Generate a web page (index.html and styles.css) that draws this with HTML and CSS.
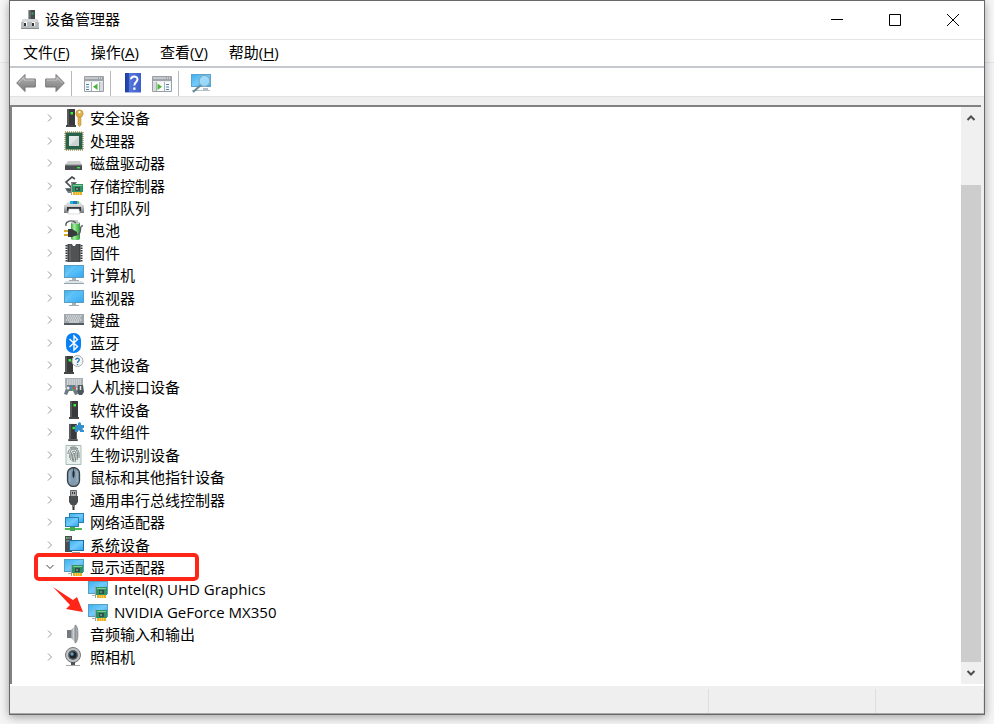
FILE: index.html
```html
<!DOCTYPE html>
<html lang="zh-CN">
<head>
<meta charset="utf-8">
<meta name="viewport" content="width=device-width, initial-scale=1">
<title>设备管理器</title>
<link rel="stylesheet" href="styles.css">
</head>
<body>
<svg class="defs" aria-hidden="true">
  <defs>
    <linearGradient id="blue" x1="0" y1="0" x2="1" y2="1"><stop offset="0" stop-color="#41b1ee"/><stop offset=".5" stop-color="#71cbfc"/><stop offset="1" stop-color="#36a7ee"/></linearGradient>
    <linearGradient id="grey" x1="0" y1="0" x2="0" y2="1"><stop offset="0" stop-color="#d8dadb"/><stop offset="1" stop-color="#74787b"/></linearGradient>
    <linearGradient id="arrow" x1="0" y1="0" x2="0" y2="1"><stop offset="0" stop-color="#b4b4b4"/><stop offset="1" stop-color="#7b7b7b"/></linearGradient>
    <linearGradient id="help" x1="0" y1="0" x2="1" y2="0"><stop offset="0" stop-color="#1d3c9e"/><stop offset=".22" stop-color="#274bb3"/><stop offset=".24" stop-color="#5677da"/><stop offset="1" stop-color="#3c5fcb"/></linearGradient>
    <linearGradient id="metal" x1="0" y1="0" x2="1" y2="0"><stop offset="0" stop-color="#8f9499"/><stop offset=".6" stop-color="#d9dcde"/><stop offset="1" stop-color="#75797d"/></linearGradient>
    <linearGradient id="cell" x1="0" y1="0" x2="1" y2="0"><stop offset="0" stop-color="#35a33c"/><stop offset=".35" stop-color="#a5f09f"/><stop offset="1" stop-color="#2d9838"/></linearGradient>
    <symbol id="chev" viewBox="0 0 10 10"><path d="M3 1.500 6.500 5 3 8.500" fill="none" stroke="currentColor"/></symbol>
    <symbol id="tower" viewBox="0 0 10 20"><path d="M1 1h8v16H1z" fill="#383a3c"/><path d="M1 1h2v16H1z" fill="#57595b"/><path d="M0 17h10v2H0z" fill="#444648"/><path d="M4.500 4h2.500v2.500H4.500z" fill="#37ef38"/></symbol>
    <symbol id="card" viewBox="0 0 12 12"><path d="M0 0h1v12H0z" fill="#9aa19f"/><path d="M1 1h11v8H1z" fill="#2b9460"/><path d="M2 2h9v1H2z" fill="#86cc94"/><path d="M4 4h5v4H4z" fill="#31504a"/><path d="M5 5h2v2H5z" fill="#6b8d80"/><path d="M2 9h9v3H2z" fill="#e9ae24"/><path d="M4.500 9v3M6.500 9v3M8.500 9v3" stroke="#fae16b" stroke-width=".6"/></symbol>
    <symbol id="screen" viewBox="0 0 20 16"><path d="M0 0h20v13H0z" fill="#5b9dbf"/><path d="M1 1h18v11H1z" fill="url(#blue)"/><path d="M1 12 13 1h6v11z" fill="#35adf4" opacity=".4"/><path d="M8 13h4v2H8z" fill="#a2b3bb"/><path d="M5 15h10v1H5z" fill="#a0acb1"/></symbol>
    <symbol id="display" viewBox="0 0 20 20"><path d="M0 2h20v13H0z" fill="#5b9dbf"/><path d="M1 3h18v11H1z" fill="url(#blue)"/><path d="M4 16h4v1H4z" fill="#a7b5ba"/><use href="#card" x="7" y="7" width="12" height="12"/></symbol>
  </defs>
</svg>

<main class="window">
  <header class="titlebar">
    <svg class="app-icon" viewBox="0 0 18 20" aria-hidden="true"><path d="M7.500 0H14v10H7.500z" fill="#464a4d"/><path d="M8 0h2v10H8z" fill="#65696c"/><path d="M10.500 2.500h2v2h-2z" fill="#31a86b"/><path d="M2 9h14l2 4v6H0v-6z" fill="#b8bbbe"/><path d="M2 9h14l1 3H1z" fill="#d6d8da"/><path d="M0 18h18v1H0z" fill="#898c8f"/><path d="M3 12h3v4H3zm8 0h3v4h-3z" fill="#fff"/><path d="M3 13h2v3H3zm8 0h2v3h-2z" fill="#333"/></svg>
    <h1>设备管理器</h1>
    <div class="captions">
      <button type="button" aria-label="最小化"><svg viewBox="0 0 12 12"><path d="M0 5.500h12"/></svg></button>
      <button type="button" aria-label="最大化"><svg viewBox="0 0 12 12"><path d="M.5.5h11v11H.5z"/></svg></button>
      <button type="button" aria-label="关闭"><svg viewBox="0 0 12 12"><path d="m0 0 12 12M12 0 0 12"/></svg></button>
    </div>
  </header>

  <nav class="menubar">
    <button type="button">文件(<u>F</u>)</button>
    <button type="button">操作(<u>A</u>)</button>
    <button type="button">查看(<u>V</u>)</button>
    <button type="button">帮助(<u>H</u>)</button>
  </nav>

  <div class="toolbar" role="toolbar">
    <button type="button" aria-label="后退"><svg viewBox="0 0 20 20"><path d="M.7 10 9 1.500V6h10.300v8H9v4.500z" fill="url(#arrow)" stroke="#777" stroke-linejoin="round"/><path d="M2.500 10 8 4.300V7h10.200" fill="none" stroke="#d0d0d0" stroke-width=".8"/></svg></button>
    <button type="button" aria-label="前进"><svg viewBox="0 0 20 20"><path d="M19.300 10 11 1.500V6H.7v8H11v4.500z" fill="url(#arrow)" stroke="#777" stroke-linejoin="round"/><path d="M1.500 7H12V4.300L17.500 10" fill="none" stroke="#d0d0d0" stroke-width=".8"/></svg></button>
    <span class="sep"></span>
    <button type="button" class="wide" aria-label="显示隐藏控制台树"><svg viewBox="0 0 20 20"><path d="M.5 3.500h19v15H.5z" fill="#f8f9f9" stroke="#999fa4"/><path d="M1 4h18v4H1z" fill="#9fa5aa"/><path d="M1 5h13M1 8.500h18" stroke="#e9ebed"/><path d="M15 5h1m1 0h1" stroke="#fff"/><path d="M7.500 9v9M15.500 9v9" stroke="#a8adb1"/><path d="M2 11.500h3M2 14h3M2 16.500h3" stroke="#4b81b5"/><path d="M8 9h7v9H8z" fill="#fff"/><path d="M13.500 10.500v6.500L9 13.700z" fill="#48b637"/><path d="M16 9h3v9h-3z" fill="#d9dcde"/></svg></button>
    <span class="sep"></span>
    <button type="button" class="wide" aria-label="帮助"><svg viewBox="0 0 20 20"><path d="M2 0h16v20H2z" fill="url(#help)"/><path d="M2 19h16v1H2z" fill="#a8b7e4"/><path d="M8 6.300C8.200 2.800 14.500 2.600 14.500 6.300c0 2.600-3.200 2.800-3.200 6.200" fill="none" stroke="#fff" stroke-width="2"/><path d="M10.200 14.500h2.300v2.300h-2.300z" fill="#fff"/></svg></button>
    <button type="button" aria-label="操作窗格"><svg viewBox="0 0 20 20"><path d="M.5 3.500h19v15H.5z" fill="#f8f9f9" stroke="#999fa4"/><path d="M1 4h18v4H1z" fill="#9fa5aa"/><path d="M1 5h13M1 8.500h18" stroke="#e9ebed"/><path d="M15 5h1m1 0h1" stroke="#fff"/><path d="M1 9h3v9H1z" fill="#d9dcde"/><path d="M4.500 9v9M12.500 9v9" stroke="#a8adb1"/><path d="M14 11.500h3M14 14h3M14 16.500h3" stroke="#4b81b5"/><path d="M5.500 10.500v6.500l4.500-3.300z" fill="#48b637"/></svg></button>
    <span class="sep"></span>
    <button type="button" class="wide" aria-label="扫描检测硬件改动"><svg viewBox="0 0 20 20"><path d="M0 1h20v13H0z" fill="#5aa3c9"/><path d="M1 2h18v11H1z" fill="url(#blue)"/><path d="M1 17h18v1H1zM12 15h5v2h-5z" fill="#b3c0c6"/><path d="m10 12-8 7" stroke="#648999" stroke-width="2"/><circle cx="13.500" cy="8" r="5.500" fill="#aee1fb" fill-opacity=".75" stroke="#7ba9bf" stroke-width="1.200"/></svg></button>
  </div>

  <section class="content">
    <ul class="tree" role="tree">
      <li><button type="button" aria-label="展开"><svg><use href="#chev"/></svg></button><svg class="icon" viewBox="0 0 20 20"><use href="#tower" x="2" width="10" height="20"/><g fill="#e1b14d" stroke="#a9802f" stroke-width=".5"><path d="M14 8h3v9l-1.500 1.500L14 17z"/><circle cx="15.500" cy="5.500" r="3.700"/></g><circle cx="15.500" cy="4.200" r="1.100" fill="#fff"/></svg><span>安全设备</span></li>
      <li><button type="button" aria-label="展开"><svg><use href="#chev"/></svg></button><svg class="icon" viewBox="0 0 20 20"><path d="M1 1h18v18H1z" fill="none" stroke="#b09a50" stroke-width="1.500" stroke-dasharray="1 1"/><path d="M1.500 1.500h17v17h-17z" fill="#2a6149"/><path d="M5 5h10v10H5z" fill="#cfd3d3"/><path d="M5 15V5h10z" fill="#e4e7e7"/></svg><span>处理器</span></li>
      <li><button type="button" aria-label="展开"><svg><use href="#chev"/></svg></button><svg class="icon" viewBox="0 0 20 20"><path d="M4 8h12l2 4H1z" fill="#cbcdcf"/><path d="M1 12h17v5H1z" fill="#4a4d4f"/><path d="M1 11.500h17v1H1z" fill="#8a8d8f"/><path d="M13 14h3v1.500h-3z" fill="#34e343"/></svg><span>磁盘驱动器</span></li>
      <li><button type="button" aria-label="展开"><svg><use href="#chev"/></svg></button><svg class="icon" viewBox="0 0 20 20"><path d="M11 3 8 1 2 6l5 5 4-4H7" fill="none" stroke="#4c5054" stroke-width="1.700"/><path d="M1 12h7v5H4z" fill="#737b7d"/><path d="M2 13h6v2H3z" fill="#4e5d59"/><use href="#card" x="7" y="7" width="12" height="12"/></svg><span>存储控制器</span></li>
      <li><button type="button" aria-label="展开"><svg><use href="#chev"/></svg></button><svg class="icon" viewBox="0 0 20 20"><path d="M4 4h12l3 3H1z" fill="#d9dcde"/><path d="M6 3h3v3H6z" fill="#1fb7c9"/><path d="M9 3h5v3H9z" fill="#2371ce"/><path d="M13 3h2v3h-2z" fill="#62c563"/><path d="M0 7h20v8H0z" fill="url(#grey)"/><path d="M3 9h14v4H3z" fill="#33383b"/><path d="M5 11h10l1 5H4z" fill="#fff" stroke="#babfc1" stroke-width=".5"/></svg><span>打印队列</span></li>
      <li><button type="button" aria-label="展开"><svg><use href="#chev"/></svg></button><svg class="icon" viewBox="0 0 20 20"><rect x="7" y="2" width="9" height="18" rx="2" fill="url(#cell)"/><path d="M9 0h5v2h1v2H8V2h1z" fill="#c1c7c2"/><path d="M2 6C1 1 8-1 12 3M11 15c9 0 3-10 8-9" fill="none" stroke="#555c60" stroke-width="1.300"/><path d="M0 10h5v2H0zm0 4h5v2H0z" fill="#dda922"/><path d="M4 9h4l5 3v3l-5 2H4z" fill="#373b3d"/></svg><span>电池</span></li>
      <li><button type="button" aria-label="展开"><svg><use href="#chev"/></svg></button><svg class="icon" viewBox="0 0 20 20"><path d="M2.500 2v17M17.500 2v17" stroke="#343638" stroke-width="2" stroke-dasharray="1.500 1"/><path d="M4 1h4l1 2h2l1-2h4v18H4z" fill="#505254"/><path d="M5 2h2v16H5z" fill="#606264"/><path d="M4 1v18M16 1v18" stroke="#303234"/></svg><span>固件</span></li>
      <li><button type="button" aria-label="展开"><svg><use href="#chev"/></svg></button><svg class="icon" viewBox="0 0 20 20"><use href="#screen" width="20" height="16"/><path d="M2 16h16l2 2H0z" fill="#dce2e5"/><path d="M0 18h20v1H0z" fill="#91a5ae"/></svg><span>计算机</span></li>
      <li><button type="button" aria-label="展开"><svg><use href="#chev"/></svg></button><svg class="icon" viewBox="0 0 20 20"><use href="#screen" y="2" width="20" height="16"/></svg><span>监视器</span></li>
      <li><button type="button" aria-label="展开"><svg><use href="#chev"/></svg></button><svg class="icon" viewBox="0 0 20 20"><path d="M0 4h20v11H0z" fill="#a0a8ad"/><path d="M0 13h20v2H0z" fill="#535c62"/><path d="M2 6h16M3 8h14M2 10h16" stroke="#f1f3f4" stroke-dasharray="1.400 .6"/><path d="M5 12h10" stroke="#e2e6e7"/></svg><span>键盘</span></li>
      <li><button type="button" aria-label="展开"><svg><use href="#chev"/></svg></button><svg class="icon" viewBox="0 0 20 20"><rect x="2" width="15" height="20" rx="7" fill="#087ff5"/><path d="m5.500 6 8 7.500L10 17V3l3.500 3.500-8 7.500" fill="none" stroke="#fff" stroke-width="1.400"/></svg><span>蓝牙</span></li>
      <li><button type="button" aria-label="展开"><svg><use href="#chev"/></svg></button><svg class="icon" viewBox="0 0 20 20"><use href="#tower" width="10" height="20"/><circle cx="13.500" cy="6" r="5.500" fill="#f4f5f5" stroke="#a6abad"/><path d="M11.700 5c.3-2.500 4-2 3.500.2-.3 1.200-1.700 1.200-1.700 2.800M13.500 9v1" fill="none" stroke="#2a79b8" stroke-width="1.400"/></svg><span>其他设备</span></li>
      <li><button type="button" aria-label="展开"><svg><use href="#chev"/></svg></button><svg class="icon" viewBox="0 0 20 20"><path d="M1 1h18v10H1z" fill="#a9b1b6"/><path d="M3 3h14M3 5h14M3 7h14" stroke="#f3f5f5" stroke-dasharray="1.500 .7"/><path d="M3 8h8l3 9-3 1-2-4H5l-2 4-3-1z" fill="#6f7b83"/><path d="M14 8h5l1 7-2 3h-3l-2-3z" fill="#4c565d"/><circle cx="4" cy="11" r="1.500" fill="#e6eaec"/><circle cx="7.500" cy="10.500" r="1.200" fill="#3195d5"/><circle cx="10" cy="11" r="1.200" fill="#d94e37"/><circle cx="9" cy="13" r="1" fill="#4fb65b"/><path d="M16.500 9v4" stroke="#e3e5e7" stroke-width="1.500"/></svg><span>人机接口设备</span></li>
      <li><button type="button" aria-label="展开"><svg><use href="#chev"/></svg></button><svg class="icon" viewBox="0 0 20 20"><use href="#tower" x="5" width="10" height="20"/></svg><span>软件设备</span></li>
      <li><button type="button" aria-label="展开"><svg><use href="#chev"/></svg></button><svg class="icon" viewBox="0 0 20 20"><use href="#tower" x="4" y="1" width="10" height="19"/><path d="M11 3h3V2c0-2.500 3-2.500 3 0v1h3v3c-2-.5-2 2.500 0 2v2h-4c.5-2-2.500-2-2 0h-3z" fill="#348fca"/></svg><span>软件组件</span></li>
      <li><button type="button" aria-label="展开"><svg><use href="#chev"/></svg></button><svg class="icon" viewBox="0 0 20 20"><path d="M2 .5h15v19H2z" fill="#e9f0ee" stroke="#a9bbb6"/><g fill="none" stroke="#65716f" stroke-width=".9"><path d="M4 9c0-8 11-8 11 0v4M5 13c2-1-1-9 5-9 4 0 4 6 3 11M6 15c2-1 0-9 4-9 3 0 2 6 1 11M8 16c1-2 0-8 2-8 1 0 0 6-1 9M6 3c3-2 6-1 8 1"/></g></svg><span>生物识别设备</span></li>
      <li><button type="button" aria-label="展开"><svg><use href="#chev"/></svg></button><svg class="icon" viewBox="0 0 20 20"><rect x="3.500" y=".5" width="12" height="19" rx="6" fill="#809bb0" stroke="#374149" stroke-width="1.300"/><path d="M6 4v11M13 4v11" stroke="#a7bac7"/><path d="M9.500 1v10" stroke="#3c4850"/><rect x="8.500" y="4" width="2" height="6" rx="1" fill="#222b31"/></svg><span>鼠标和其他指针设备</span></li>
      <li><button type="button" aria-label="展开"><svg><use href="#chev"/></svg></button><svg class="icon" viewBox="0 0 20 20"><path d="M6.500.5h6v6h-6z" fill="#a5a9ab" stroke="#676b6e"/><path d="M8 2h1v2H8zm2 0h1v2h-1z" fill="#34383a"/><path d="M5 6h9v6l-2 3H7l-2-3z" fill="#4a4d50"/><path d="M8 15h3v2H8z" fill="#73777a"/><path d="M8.500 17h2v3h-2z" fill="#333"/></svg><span>通用串行总线控制器</span></li>
      <li><button type="button" aria-label="展开"><svg><use href="#chev"/></svg></button><svg class="icon" viewBox="0 0 20 20"><path d="M5 1h15v10H5z" fill="#2481b5"/><path d="M6 2h13v8H6z" fill="url(#blue)"/><path d="M1 5h14v10H1z" fill="#287fae"/><path d="M2 6h12v8H2z" fill="url(#blue)"/><path d="M1 16h17v2H1z" fill="#4dbb54"/><path d="M6 15h5v4H6z" fill="#46a950"/></svg><span>网络适配器</span></li>
      <li><button type="button" aria-label="展开"><svg><use href="#chev"/></svg></button><svg class="icon" viewBox="0 0 20 20"><path d="M1 1h7v16H1z" fill="#4a4e51"/><path d="M2 3h5M2 6h5" stroke="#a3a8aa"/><path d="M2 2h1v2H2z" fill="#33d547"/><path d="M5 5h15v11H5z" fill="#1d6d9e"/><path d="M6 6h13v9H6z" fill="url(#blue)"/><path d="M8 17h8v1H8z" fill="#8ca3ae"/></svg><span>系统设备</span></li>
      <li class="marked"><button type="button" aria-label="折叠" class="open"><svg><use href="#chev"/></svg></button><svg class="icon" viewBox="0 0 20 20"><use href="#display"/></svg><span>显示适配器</span></li>
      <li class="child"><svg class="icon" viewBox="0 0 20 20"><use href="#display"/></svg><span>Intel(R) UHD Graphics</span></li>
      <li class="child"><svg class="pointer" viewBox="0 0 32 27" aria-hidden="true"><path d="M1 1 21 14l4-3 6 15-17-3 4-4z" fill="#ff2617"/></svg><svg class="icon" viewBox="0 0 20 20"><use href="#display"/></svg><span>NVIDIA GeForce MX350</span></li>
      <li><button type="button" aria-label="展开"><svg><use href="#chev"/></svg></button><svg class="icon" viewBox="0 0 20 20"><path d="M3 6h4v8H3z" fill="#74797d"/><path d="M7 6 12 1v18l-5-5z" fill="url(#metal)"/><path d="M11 1c4 0 4 18 0 18z" fill="#a3a9ad" stroke="#6e7478" stroke-width=".6"/></svg><span>音频输入和输出</span></li>
      <li><button type="button" aria-label="展开"><svg><use href="#chev"/></svg></button><svg class="icon" viewBox="0 0 20 20"><circle cx="9" cy="8" r="7.500" fill="#c0c3c5" stroke="#74787b"/><circle cx="9" cy="8" r="5" fill="#595e62"/><circle cx="9" cy="8" r="3.500" fill="#1d252b"/><circle cx="8" cy="7" r="1.700" fill="#6a9bbd"/><path d="M7 15h4v3H7z" fill="#505457"/><path d="M2 18h14v1H2z" fill="#a7aaac"/></svg><span>照相机</span></li>
    </ul>
    <div class="scrollbar">
      <button type="button" class="up" aria-label="向上滚动"><svg><use href="#chev"/></svg></button>
      <div class="track"><div class="thumb"></div></div>
      <button type="button" class="down" aria-label="向下滚动"><svg><use href="#chev"/></svg></button>
    </div>
  </section>

  <footer class="status"><span></span><span></span><span></span></footer>
</main>
</body>
</html>
```
FILE: styles.css
```css
*,
*::before,
*::after {
  box-sizing: border-box;
}

body {
  display: flex;
  min-height: 100vh;
  margin: 0;
  padding: 0 9px 9px;
  background: linear-gradient(#f7f7f7 62px, #e6e6e6 62px, #e6e6e6 63px, #f5f5f5 63px);
  color: #000;
  font: 15px/20px "Open Sans", "Noto Sans CJK SC", sans-serif;
}

.defs {
  position: absolute;
  width: 0;
  height: 0;
}

button {
  display: flex;
  align-items: center;
  justify-content: center;
  margin: 0;
  padding: 0;
  border: 0;
  background: none;
  color: inherit;
  font: inherit;
}

.window {
  display: flex;
  flex: 1;
  flex-direction: column;
  border: 1px solid #686868;
  background: #efefef;
  box-shadow: 0 2px 9px rgb(0 0 0 / 35%);
}

.titlebar {
  display: flex;
  align-items: center;
  height: 39px;
  padding: 0 2px 0 11px;
  border-bottom: 1px solid #e6e6e6;
  background: #fff;
}

.app-icon {
  width: 18px;
  height: 20px;
}

h1 {
  flex: 1;
  margin: 0 0 0 6px;
  padding-bottom: 2px;
  font-size: 15px;
  font-weight: 400;
}

.captions {
  display: flex;
}

.captions button {
  width: 58px;
  height: 38px;
}

.captions svg {
  width: 12px;
  height: 12px;
  overflow: visible;
  fill: none;
  stroke: #000;
}

.menubar {
  display: flex;
  gap: 21px;
  height: 28px;
  padding: 0 0 2px 13px;
  border-bottom: 2px solid #c5c9cd;
  background: #fff;
}

.menubar button {
  display: block;
}

u {
  text-decoration-thickness: 1px;
  text-underline-offset: 2px;
}

.toolbar {
  display: flex;
  align-items: center;
  height: 29px;
  padding: 2px 0 0 6px;
  border-bottom: 1px solid #e2e2e2;
  background: #fff;
}

.toolbar button {
  width: 20px;
  margin-right: 9px;
}

.toolbar svg {
  width: 20px;
  height: 20px;
}

.toolbar .sep {
  width: 1px;
  height: 25px;
  margin-left: -3px;
  background: #b8b8b8;
}

.toolbar .wide {
  margin-left: 12px;
}

.content {
  display: flex;
  flex: 1;
  margin: 8px 3px 0 0;
  border: solid #828282;
  border-width: 2px 0 0 2px;
  background: #fff;
}

.tree {
  display: grid;
  flex: 1;
  grid-auto-rows: 1fr;
  margin: 0;
  padding: 0 0 16px 28px;
  list-style: none;
}

.tree li {
  position: relative;
  display: flex;
  align-items: center;
  min-height: 22px;
}

.tree button {
  width: 20px;
  height: 20px;
  color: #999;
}

.tree button svg,
.scrollbar svg {
  width: 10px;
  height: 10px;
}

.tree .open {
  color: #404040;
}

.open svg,
.down svg {
  transform: rotate(90deg);
}

.up svg {
  transform: rotate(-90deg);
}

.icon {
  width: 20px;
  height: 20px;
  margin: 0 6px 0 4px;
}

.tree .child {
  padding-left: 44px;
}

.marked::after {
  position: absolute;
  top: -3px;
  left: -6px;
  width: 165px;
  height: 28px;
  border: 4px solid #ff2617;
  border-radius: 5px;
  content: "";
}

.pointer {
  position: absolute;
  bottom: 10px;
  left: 12px;
  width: 32px;
  height: 27px;
}

.scrollbar {
  display: flex;
  flex-direction: column;
  width: 20px;
  background: #f0f0f0;
}

.scrollbar button {
  height: 22px;
  color: #505050;
}

.scrollbar svg {
  stroke-width: 2px;
}

.track {
  display: flex;
  flex: 1;
  flex-direction: column;
}

.track::before {
  flex: 2;
  content: "";
}

.thumb {
  flex: 17;
  background: #cdcdcd;
}

.status {
  display: grid;
  grid-template-columns: 1fr 167px 108px;
  height: 30px;
  padding-top: 3px;
  border-top: 2px solid #fff;
  border-bottom: 1px solid #a8a8a8;
}

.status span {
  border-right: 1px solid #dedede;
}
```
